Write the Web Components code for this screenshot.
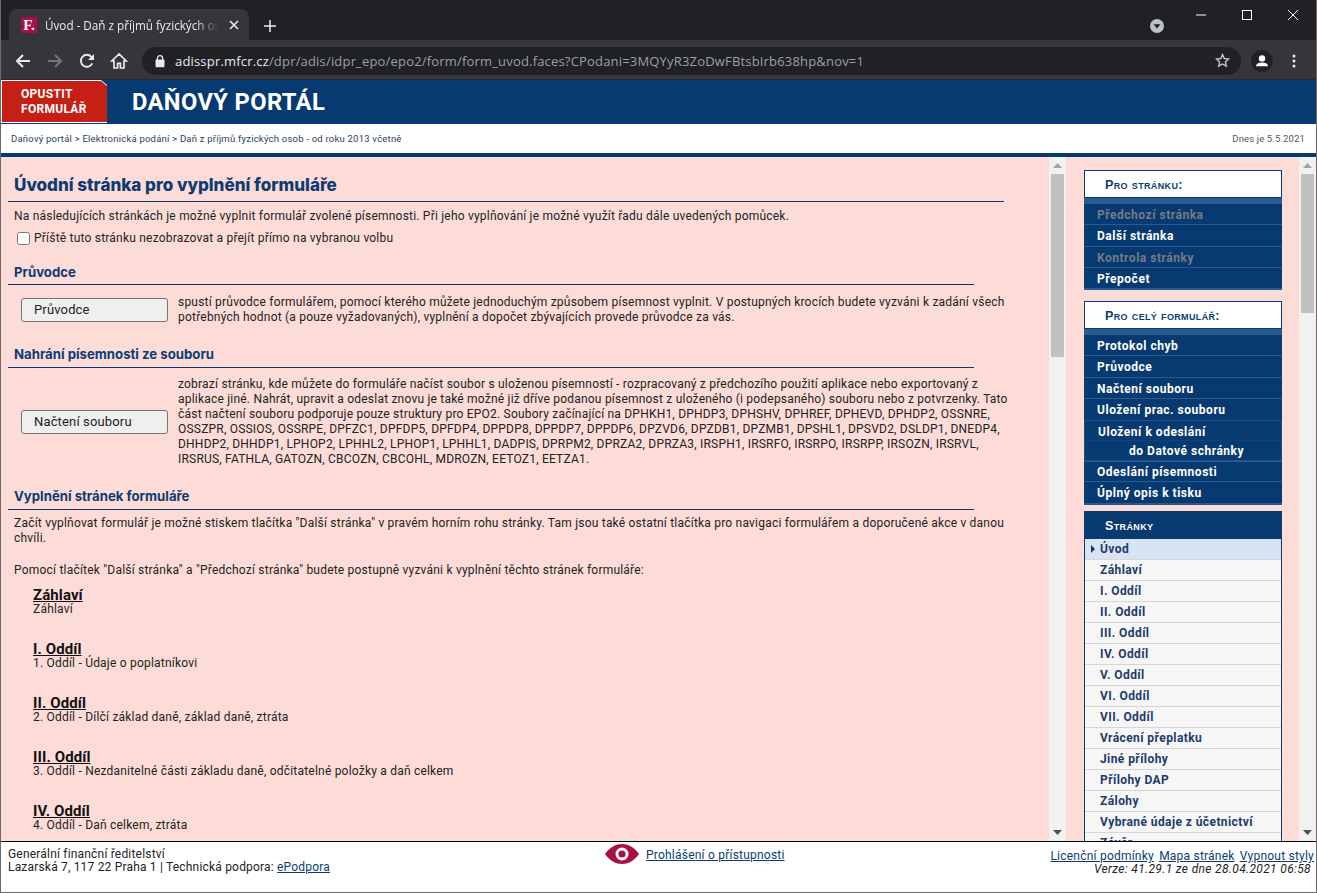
<!DOCTYPE html>
<html lang="cs">
<head>
<meta charset="utf-8">
<title>Daňový portál</title>
<style>
  html, body { margin: 0; height: 100%; overflow: hidden; background: #fff; }
  body { font: 12px Roboto, "Liberation Sans", sans-serif; color: #1b1b1b; }
</style>
</head>
<body>
<portal-app>
  <browser-bar slot="top"></browser-bar>
  <portal-header slot="top"></portal-header>
  <crumb-bar slot="top"
    path="Daňový portál > Elektronická podání > Daň z příjmů fyzických osob - od roku 2013 včetně"
    today="Dnes je 5.5.2021"></crumb-bar>

  <form-intro slot="main"></form-intro>
  <scroll-track slot="main" thumb="183"></scroll-track>
  <side-panel slot="main"></side-panel>
  <scroll-track slot="main" thumb="139"></scroll-track>

  <portal-footer slot="bottom"></portal-footer>
</portal-app>

<script>
class PortalApp extends HTMLElement {
  constructor() {
    super();
    this.attachShadow({ mode: "open" });
    this.shadowRoot.innerHTML = `
      <style>
        :host { display: flex; flex-direction: column; width: 1317px; height: 893px; box-sizing: border-box;
          border: 1px solid #6e6a6a; border-top: 0; overflow: hidden; }
        .main { flex: 1; min-height: 0; display: flex; background: #fddcd8; overflow: hidden; }
      </style>
      <slot name="top"></slot>
      <div class="main"><slot name="main"></slot></div>
      <slot name="bottom"></slot>
    `;
  }
}

class BrowserBar extends HTMLElement {
  constructor() {
    super();
    this.attachShadow({ mode: "open" });
    this.shadowRoot.innerHTML = `
      <style>
        :host { display: block; margin-left: -1px; margin-right: -1px; font-family: "Open Sans", "Noto Sans", sans-serif; }
        svg { display: block; flex: none; }
        .strip { height: 40px; background: #202124; display: flex; align-items: flex-end; padding-left: 9px; }
        .tab { width: 240px; height: 31px; box-sizing: border-box; background: #35363a; border-radius: 8px 8px 0 0;
          display: flex; align-items: center; padding: 0 9px 0 12px; color: #e8eaed; }
        .fav { width: 16px; height: 16px; background: #a90f45; color: #fff; flex: none; display: flex; align-items: center;
          justify-content: center; font: bold 15px/16px "Liberation Serif", serif; }
        .title { margin-left: 8px; flex: 1; font-size: 11.7px; white-space: nowrap; overflow: hidden;
          -webkit-mask-image: linear-gradient(90deg, #000 150px, transparent 174px); }
        .plus { margin: 12px 0 0 14px; align-self: center; }
        .caret { margin-left: 873px; align-self: center; margin-bottom: -12px; }
        .win { margin-left: auto; margin-right: 1px; align-self: flex-start; display: flex; }
        .win div { width: 46px; height: 30px; display: flex; align-items: center; justify-content: center; }
        .tools { height: 37px; padding-top: 2px; background: #35363a; display: flex; align-items: center; padding-left: 7px; border-bottom: 1px solid #28292c; }
        .btn { width: 32px; height: 32px; display: flex; align-items: center; justify-content: center; flex: none; }
        .url { margin-left: 7px; width: 1099px; height: 28px; border-radius: 14px; background: #202124; display: flex;
          align-items: center; box-sizing: border-box; padding: 0 11px 0 12px; flex: none; }
        .addr { margin-left: 9px; font-size: 13px; letter-spacing: .18px; white-space: nowrap; color: #9aa0a6; flex: 1; overflow: hidden; }
        .addr b { font-weight: 400; color: #e8eaed; }
        .ava { margin-left: 5px; }
      </style>
      <div class="strip">
        <div class="tab">
          <div class="fav">F.</div>
          <div class="title">Úvod - Daň z příjmů fyzických osob - od roku 2013</div>
          <svg width="12" height="12" viewBox="0 0 12 12"><path d="M2 2l8 8M10 2l-8 8" stroke="#e8eaed" stroke-width="1.6"/></svg>
        </div>
        <svg class="plus" width="14" height="14" viewBox="0 0 14 14"><path d="M7 1v12M1 7h12" stroke="#e8eaed" stroke-width="1.5"/></svg>
        <svg class="caret" width="14" height="14" viewBox="0 0 14 14"><circle cx="7" cy="7" r="7" fill="#bdc1c6"/><path d="M3.6 5.2h6.8L7 9.6z" fill="#202124"/></svg>
        <div class="win">
          <div><svg width="12" height="12" viewBox="0 0 12 12"><path d="M1 6h10" stroke="#fff"/></svg></div>
          <div><svg width="12" height="12" viewBox="0 0 12 12"><rect x="1.5" y="1.5" width="9" height="9" fill="none" stroke="#fff"/></svg></div>
          <div><svg width="12" height="12" viewBox="0 0 12 12"><path d="M1 1l10 10M11 1L1 11" stroke="#fff"/></svg></div>
        </div>
      </div>
      <div class="tools">
        <div class="btn"><svg width="16" height="16" viewBox="0 0 16 16"><path d="M15 8H2M8 2L2 8l6 6" fill="none" stroke="#e8eaed" stroke-width="2"/></svg></div>
        <div class="btn"><svg width="16" height="16" viewBox="0 0 16 16"><path d="M1 8h13M8 2l6 6-6 6" fill="none" stroke="#74787c" stroke-width="2"/></svg></div>
        <div class="btn"><svg width="16" height="16" viewBox="0 0 16 16"><path d="M13.3 10.4A6 6 0 1 1 12.4 3.8L14.5 6" fill="none" stroke="#e8eaed" stroke-width="1.9"/><path d="M15 1v6H9z" fill="#e8eaed"/></svg></div>
        <div class="btn"><svg width="18" height="18" viewBox="0 0 18 18"><path d="M9 2L1.8 9H4v7h3.6v-4.6h2.8V16H14V9h2.2z" fill="none" stroke="#e8eaed" stroke-width="1.7"/></svg></div>
        <div class="url">
          <svg width="12" height="14" viewBox="0 0 12 14"><path d="M3.4 6V4.2a2.6 2.6 0 0 1 5.2 0V6" fill="none" stroke="#e8eaed" stroke-width="1.3"/><rect x="1.5" y="5.6" width="9" height="7.6" rx="1" fill="#e8eaed"/></svg>
          <div class="addr"><b>adisspr.mfcr.cz</b>/dpr/adis/idpr_epo/epo2/form/form_uvod.faces?CPodani=3MQYyR3ZoDwFBtsbIrb638hp&amp;nov=1</div>
          <svg width="15" height="15" viewBox="0 0 24 24"><path d="M12 2.6l2.9 6.2 6.8.8-5 4.6 1.3 6.7-6-3.4-6 3.4 1.3-6.7-5-4.6 6.8-.8z" fill="none" stroke="#c4c7ca" stroke-width="2.2"/></svg>
        </div>
        <div class="btn ava"><svg width="22" height="22" viewBox="0 0 22 22"><circle cx="11" cy="11" r="11" fill="#202124"/><circle cx="11" cy="8.4" r="3.2" fill="#fff"/><path d="M5 16.2c0-2.6 3.6-3.6 6-3.6s6 1 6 3.6z" fill="#fff"/></svg></div>
        <div class="btn"><svg width="4" height="14" viewBox="0 0 4 14"><circle cx="2" cy="2" r="1.5" fill="#e8eaed"/><circle cx="2" cy="7" r="1.5" fill="#e8eaed"/><circle cx="2" cy="12" r="1.5" fill="#e8eaed"/></svg></div>
      </div>
    `;
  }
}

class PortalHeader extends HTMLElement {
  constructor() {
    super();
    this.attachShadow({ mode: "open" });
    this.shadowRoot.innerHTML = `
      <style>
        :host { display: flex; height: 44px; background: #073a70; }
        .wrap { width: 106px; height: 43px; background: #fff; clip-path: polygon(0 0, 100px 0, 106px 5px, 106px 43px, 0 43px); }
        a { display: block; box-sizing: border-box; margin: 1px 1px 0 1px; width: 105px; height: 41px; background: #c61f16; color: #fff;
          font: bold 12px/14.5px Roboto, sans-serif; padding: 6px 0 0 19px; letter-spacing: .3px;
          clip-path: polygon(0 0, 99px 0, 105px 5px, 105px 41px, 0 41px); }
        h1 { margin: 0 0 0 25px; font: bold 23.7px/44px Roboto, sans-serif; color: #fff; letter-spacing: .38px; }
      </style>
      <div class="wrap"><a>OPUSTIT<br>FORMULÁŘ</a></div>
      <h1>DAŇOVÝ PORTÁL</h1>
    `;
  }
}

class CrumbBar extends HTMLElement {
  constructor() {
    super();
    this.attachShadow({ mode: "open" });
    this.shadowRoot.innerHTML = `
      <style>
        :host { display: flex; justify-content: space-between; align-items: center; height: 29px; box-sizing: content-box;
          padding: 0 11px 0 10px; background: #fff; border-bottom: 4px solid #073a70;
          font: 9.5px Roboto, sans-serif; letter-spacing: .22px; color: #2c3e5c; }
        .d { color: #555; letter-spacing: .14px; }
      </style>
      <span></span><span class="d"></span>
    `;
    const spans = this.shadowRoot.querySelectorAll("span");
    spans[0].textContent = this.getAttribute("path");
    spans[1].textContent = this.getAttribute("today");
  }
}

class FormIntro extends HTMLElement {
  constructor() {
    super();
    const pages = [
      ["Záhlaví", "Záhlaví"],
      ["I. Oddíl", "1. Oddíl - Údaje o poplatníkovi"],
      ["II. Oddíl", "2. Oddíl - Dílčí základ daně, základ daně, ztráta"],
      ["III. Oddíl", "3. Oddíl - Nezdanitelné části základu daně, odčitatelné položky a daň celkem"],
      ["IV. Oddíl", "4. Oddíl - Daň celkem, ztráta"]
    ];
    let list = "";
    pages.forEach(([name, desc]) => {
      list += `<div class="page"><a>${name}</a><span>${desc}</span></div>`;
    });
    this.attachShadow({ mode: "open" });
    this.shadowRoot.innerHTML = `
      <style>
        :host { display: block; width: 1048px; flex: none; box-sizing: border-box; padding: 17px 14px 0 7px;
          font: 12px/15px Roboto, sans-serif; letter-spacing: .21px; color: #222; overflow: hidden; }
        h1 { margin: 0; width: 996px; box-sizing: border-box; padding: 0 0 5px 6px; border-bottom: 1px solid #073a70;
          font: 800 17.05px/22px Inter, "Open Sans", sans-serif; letter-spacing: 0; color: #0c3c72; }
        h2 { margin: 0; width: 966px; box-sizing: border-box; padding: 0 0 3px 6px; border-bottom: 1px solid #073a70;
          font: 700 13.2px/18px Inter, "Open Sans", sans-serif; color: #0c3c72; letter-spacing: 0; }
        p { margin: 0; padding-left: 6px; }
        .check { display: flex; align-items: center; height: 15px; padding-left: 9px; margin-top: 7px; }
        .check i { width: 13px; height: 13px; box-sizing: border-box; border: 1px solid #767676; border-radius: 2.5px; background: #fff; margin-right: 4px; }
        .tool { display: flex; align-items: center; padding-left: 13px; }
        button { width: 147px; height: 24px; flex: none; box-sizing: border-box; border: 1px solid #767676; border-radius: 3px; background: #efefef;
          font: 13px Roboto, sans-serif; color: #222; text-align: left; padding: 0 0 0 12px; letter-spacing: .15px; margin-right: 10px; }
        .tool div { width: 845px; padding-top: 1px; }
        .page { padding-left: 25px; height: 54px; }
        .page:first-of-type { height: 56px; }
        .page a { display: block; font: bold 15px/14px Roboto, sans-serif; letter-spacing: .1px; color: #111; text-decoration: underline; }
        .page span { display: block; line-height: 14px; }
      </style>
      <h1>Úvodní stránka pro vyplnění formuláře</h1>
      <p style="margin-top:7px">Na následujících stránkách je možné vyplnit formulář zvolené písemnosti. Při jeho vyplňování je možné využít řadu dále uvedených pomůcek.</p>
      <label class="check"><i></i>Příště tuto stránku nezobrazovat a přejít přímo na vybranou volbu</label>
      <h2 style="margin-top:17px">Průvodce</h2>
      <div class="tool" style="margin-top:9px">
        <button>Průvodce</button>
        <div>spustí průvodce formulářem, pomocí kterého můžete jednoduchým způsobem písemnost vyplnit. V postupných krocích budete vyzváni k zadání všech potřebných hodnot (a pouze vyžadovaných), vyplnění a dopočet zbývajících provede průvodce za vás.</div>
      </div>
      <h2 style="margin-top:20px;padding-bottom:4px">Nahrání písemnosti ze souboru</h2>
      <div class="tool" style="margin-top:8px">
        <button>Načtení souboru</button>
        <div>zobrazí stránku, kde můžete do formuláře načíst soubor s uloženou písemností - rozpracovaný z předchozího použití aplikace nebo exportovaný z aplikace jiné. Nahrát, upravit a odeslat znovu je také možné již dříve podanou písemnost z uloženého (i podepsaného) souboru nebo z potvrzenky. Tato část načtení souboru podporuje pouze struktury pro EPO2. Soubory začínající na DPHKH1, DPHDP3, DPHSHV, DPHREF, DPHEVD, DPHDP2, OSSNRE, OSSZPR, OSSIOS, OSSRPE, DPFZC1, DPFDP5, DPFDP4, DPPDP8, DPPDP7, DPPDP6, DPZVD6, DPZDB1, DPZMB1, DPSHL1, DPSVD2, DSLDP1, DNEDP4, DHHDP2, DHHDP1, LPHOP2, LPHHL2, LPHOP1, LPHHL1, DADPIS, DPRPM2, DPRZA2, DPRZA3, IRSPH1, IRSRFO, IRSRPO, IRSRPP, IRSOZN, IRSRVL, IRSRUS, FATHLA, GATOZN, CBCOZN, CBCOHL, MDROZN, EETOZ1, EETZA1.</div>
      </div>
      <h2 style="margin-top:20px;padding-bottom:4px">Vyplnění stránek formuláře</h2>
      <p style="margin-top:6px">Začít vyplňovat formulář je možné stiskem tlačítka "Další stránka" v pravém horním rohu stránky. Tam jsou také ostatní tlačítka pro navigaci formulářem a doporučené akce v danou chvíli.</p>
      <p style="margin-top:17px;margin-bottom:10px">Pomocí tlačítek "Další stránka" a "Předchozí stránka" budete postupně vyzváni k vyplnění těchto stránek formuláře:</p>
      ${list}
    `;
  }
}

class ScrollTrack extends HTMLElement {
  constructor() {
    super();
    this.attachShadow({ mode: "open" });
    this.shadowRoot.innerHTML = `
      <style>
        :host { display: flex; flex-direction: column; align-items: center; justify-content: space-between; width: 17px; flex: none; background: #f1f1f1; }
        .up, .down { height: 17px; width: 100%; display: flex; align-items: center; justify-content: center; flex: none; }
        .thumb { width: 13px; background: #c1c1c1; position: relative; }
        .mid { flex: 1; }
      </style>
      <div class="up"><svg width="9" height="5" viewBox="0 0 9 5"><path d="M4.5 0L9 5H0z" fill="#a3a3a3"/></svg></div>
      <div class="thumb" style="height:${this.getAttribute("thumb")}px"></div>
      <div class="mid"></div>
      <div class="down"><svg width="9" height="5" viewBox="0 0 9 5"><path d="M0 0h9L4.5 5z" fill="#505050"/></svg></div>
    `;
  }
}

class MenuBox extends HTMLElement {
  constructor() {
    super();
    this.attachShadow({ mode: "open" });
    this.shadowRoot.innerHTML = `
      <style>
        :host { display: block; width: 198px; background: #073a70; border-bottom: 2px solid #285b92; }
        .head { height: 28px; box-sizing: border-box; border: 1px solid #073a70; background: #fff; color: #0c3c72; padding-left: 20px;
          font: bold 12.6px/29px "Liberation Sans", sans-serif; font-variant: small-caps; letter-spacing: .35px; }
        .stripe { height: 6px; background: #285b92; }
      </style>
      <div class="head"></div>
      <div class="stripe"></div>
      <slot></slot>
    `;
    this.shadowRoot.querySelector(".head").textContent = this.getAttribute("label");
  }
}

class MenuItem extends HTMLElement {
  constructor() {
    super();
    this.attachShadow({ mode: "open" });
    this.shadowRoot.innerHTML = `
      <style>
        :host { display: flex; align-items: center; height: 21px; box-sizing: border-box; padding: 3px 0 0 13px; border-top: 1px solid #285b92;
          font: bold 12px/15px Roboto, sans-serif; letter-spacing: .52px; color: #fff; }
        :host(:first-child) { border-top: 0; padding-top: 2px; }
        :host([h]) { padding-top: 2px; }
        :host([off]) { color: #757b85; }
        :host([two]) { display: block; height: 41px; padding: 0; border: 1px solid #1e4f8c; }
        .a { padding-left: 13px; height: 19px; line-height: 22px; border-bottom: 1px solid #123f7c; }
        .b { padding-left: 44px; height: 19px; line-height: 20px; }
      </style>
      <slot></slot>
    `;
    if (this.getAttribute("h")) this.style.height = this.getAttribute("h") + "px";
    if (this.hasAttribute("two")) {
      const [a, b] = this.textContent.split("|");
      this.textContent = "";
      this.shadowRoot.innerHTML = this.shadowRoot.querySelector("style").outerHTML +
        `<div class="a">${a}</div><div class="b">${b}</div>`;
    }
  }
}

class PageList extends HTMLElement {
  constructor() {
    super();
    this.attachShadow({ mode: "open" });
    const names = this.getAttribute("pages").split("|");
    let rows = "";
    names.forEach((name, i) => {
      rows += `<div class="row${i === 0 ? " on" : ""}">${name}</div>`;
    });
    this.shadowRoot.innerHTML = `
      <style>
        :host { display: block; width: 198px; box-sizing: border-box; border: 1px solid #073a70; border-width: 0 1px; background: #f6f6f6; }
        .head { height: 28px; margin: 0 -1px; background: #073a70; color: #fff; padding-left: 21px;
          font: bold 12.6px/31px "Liberation Sans", sans-serif; font-variant: small-caps; letter-spacing: .35px; }
        .row { height: 21px; box-sizing: border-box; border-bottom: 1px solid #d6d6d6; padding-left: 15px; position: relative;
          font: bold 12px/21px Roboto, sans-serif; letter-spacing: .42px; color: #1d3c6a; }
        .on { background: #d8e4f4; }
        .on::before { content: ""; position: absolute; left: 6px; top: 6px; border-left: 4px solid #073a70; border-top: 4px solid transparent; border-bottom: 4px solid transparent; }
      </style>
      <div class="head">${this.getAttribute("label")}</div>
      ${rows}
    `;
  }
}

class SidePanel extends HTMLElement {
  constructor() {
    super();
    this.attachShadow({ mode: "open" });
    this.shadowRoot.innerHTML = `
      <style>
        :host { display: flex; flex-direction: column; width: 233px; flex: none; box-sizing: border-box; padding: 13px 0 0 18px; gap: 11px; overflow: hidden; }
        menu-box + menu-box { margin-bottom: -5px; }
      </style>
      <menu-box label="Pro stránku:">
        <menu-item off h="20">Předchozí stránka</menu-item>
        <menu-item h="22">Další stránka</menu-item>
        <menu-item off h="21">Kontrola stránky</menu-item>
        <menu-item>Přepočet</menu-item>
      </menu-box>
      <menu-box label="Pro celý formulář:">
        <menu-item h="20">Protokol chyb</menu-item>
        <menu-item h="22">Průvodce</menu-item>
        <menu-item>Načtení souboru</menu-item>
        <menu-item h="22">Uložení prac. souboru</menu-item>
        <menu-item two>Uložení k odeslání|do Datové schránky</menu-item>
        <menu-item h="20">Odeslání písemnosti</menu-item>
        <menu-item h="22">Úplný opis k tisku</menu-item>
      </menu-box>
      <page-list label="Stránky" pages="Úvod|Záhlaví|I. Oddíl|II. Oddíl|III. Oddíl|IV. Oddíl|V. Oddíl|VI. Oddíl|VII. Oddíl|Vrácení přeplatku|Jiné přílohy|Přílohy DAP|Zálohy|Vybrané údaje z účetnictví|Závěr"></page-list>
    `;
  }
}

class PortalFooter extends HTMLElement {
  constructor() {
    super();
    this.attachShadow({ mode: "open" });
    this.shadowRoot.innerHTML = `
      <style>
        :host { display: grid; grid-template-columns: 604px auto 1fr; height: 51px; box-sizing: border-box; background: #fff;
          border-top: 1px solid #000; font: 12px/13px Roboto, sans-serif; letter-spacing: .19px; color: #222; }
        a { color: #0c3c72; text-decoration: underline; }
        .l { padding: 6px 0 0 7px; }
        .c { display: flex; align-items: flex-start; gap: 7px; padding-top: 2px; }
        .c a { margin-top: 5px; letter-spacing: .22px; }
        .r { padding: 8px 2px 0 0; text-align: right; letter-spacing: .22px; }
        .r a { margin-left: 2px; }
        em { font-size: 12px; letter-spacing: .34px; padding-right: 3px; }
      </style>
      <div class="l">Generální finanční ředitelství<br>Lazarská 7, 117 22 Praha 1 | Technická podpora: <a>ePodpora</a></div>
      <div class="c">
        <svg width="34" height="20" viewBox="0 0 34 20"><path d="M0 10C5 3 11 0 17 0s12 3 17 10c-5 7-11 10-17 10S5 17 0 10z" fill="#a90f45"/><circle cx="17" cy="10" r="6.5" fill="#fff"/><circle cx="17" cy="10" r="3.6" fill="#a90f45"/></svg>
        <a>Prohlášení o přístupnosti</a>
      </div>
      <div class="r"><a>Licenční podmínky</a> <a>Mapa stránek</a> <a>Vypnout styly</a><br><em>Verze: 41.29.1 ze dne 28.04.2021 06:58</em></div>
    `;
  }
}

customElements.define("menu-item", MenuItem);
customElements.define("menu-box", MenuBox);
customElements.define("page-list", PageList);
customElements.define("browser-bar", BrowserBar);
customElements.define("portal-header", PortalHeader);
customElements.define("crumb-bar", CrumbBar);
customElements.define("form-intro", FormIntro);
customElements.define("scroll-track", ScrollTrack);
customElements.define("side-panel", SidePanel);
customElements.define("portal-footer", PortalFooter);
customElements.define("portal-app", PortalApp);
</script>
</body>
</html>
